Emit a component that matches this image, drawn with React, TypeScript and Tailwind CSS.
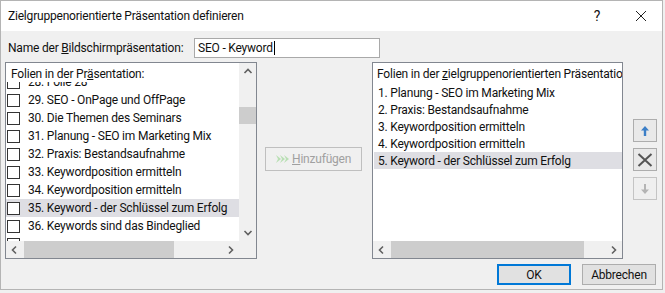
import React from "react";

const leftRows = [
  { n: "28. Folie 28" },
  { n: "29. SEO - OnPage und OffPage" },
  { n: "30. Die Themen des Seminars" },
  { n: "31. Planung - SEO im Marketing Mix" },
  { n: "32. Praxis: Bestandsaufnahme" },
  { n: "33. Keywordposition ermitteln" },
  { n: "34. Keywordposition ermitteln" },
  { n: "35. Keyword - der Schlüssel zum Erfolg", sel: true },
  { n: "36. Keywords sind das Bindeglied" },
  { n: "" },
];

const rightRows = [
  "1. Planung - SEO im Marketing Mix",
  "2. Praxis: Bestandsaufnahme",
  "3. Keywordposition ermitteln",
  "4. Keywordposition ermitteln",
  "5. Keyword - der Schlüssel zum Erfolg",
];

function Chevron({ dir }: { dir: "up" | "down" | "left" | "right" }) {
  const d = {
    up: "M1.5 6 L5 2.5 L8.5 6",
    down: "M1.5 3 L5 6.5 L8.5 3",
    left: "M6 1.5 L2.5 5 L6 8.5",
    right: "M3 1.5 L6.5 5 L3 8.5",
  }[dir];
  return (
    <svg width="10" height="10" viewBox="0 0 10 10">
      <path d={d} fill="none" stroke="#606060" strokeWidth="1.6" />
    </svg>
  );
}

function HScroll({ thumbLeft, thumbWidth }: { thumbLeft: number; thumbWidth: number }) {
  return (
    <div className="flex h-[17px] items-center bg-[#f0f0f0]">
      <div className="flex w-[17px] justify-center">
        <Chevron dir="left" />
      </div>
      <div className="relative h-full flex-1">
        <div
          className="absolute top-0 h-full bg-[#cdcdcd]"
          style={{ left: thumbLeft, width: thumbWidth }}
        />
      </div>
      <div className="flex w-[17px] justify-center">
        <Chevron dir="right" />
      </div>
    </div>
  );
}

export default function App() {
  return (
    <div
      className="h-[293px] w-[665px] bg-[#f0f0f0] text-[12px] tracking-[-0.2px] text-[#111]"
      style={{ fontFamily: 'Roboto, "Open Sans", sans-serif' }}
    >
      <div className="flex h-[290px] w-[663px] flex-col border border-[#b4b4b4] bg-[#f0f0f0]">
        {/* title bar */}
        <div className="flex h-[30px] items-center bg-white pl-[7px]">
          <span className="text-[12px]">Zielgruppenorientierte Präsentation definieren</span>
          <span className="ml-auto w-[14px] text-center text-[14px]">?</span>
          <span className="ml-[30px] mr-[14px] flex w-[14px] justify-center">
            <svg width="12" height="12" viewBox="0 0 12 12">
              <path d="M1 1 L11 11 M11 1 L1 11" stroke="#222" strokeWidth="1" />
            </svg>
          </span>
        </div>

        <div className="flex flex-1 flex-col pl-[4px]">
          {/* name row */}
          <div className="mt-[7px] flex h-[20px] items-center">
            <span className="ml-[3px] w-[186px] whitespace-nowrap">
              Name der <u>B</u>ildschirmpräsentation:
            </span>
            <div className="flex h-[20px] w-[186px] items-center border border-[#a9a9a9] bg-white pl-[3px]">
              SEO - Keyword
              <span className="ml-[1px] inline-block h-[14px] w-[1px] bg-black" />
            </div>
          </div>

          {/* lists row */}
          <div className="mt-[4px] flex">
            {/* left list */}
            <div className="flex h-[197px] w-[252px] flex-col border border-[#828790] bg-white">
              <div className="flex flex-1 overflow-hidden">
                <div className="flex flex-1 flex-col overflow-hidden">
                  <div className="relative z-10 h-[19px] shrink-0 bg-white pl-[5px] pt-[2px]">
                    Folien in der Pr<u>ä</u>sentation:
                  </div>
                  <div className="-mt-[9px] flex flex-col">
                    {leftRows.map((r, i) => (
                      <div
                        key={i}
                        className={`flex h-[18px] shrink-0 items-center whitespace-nowrap pl-[1px] ${r.sel ? "bg-[#dedee3]" : ""}`}
                      >
                        <span className="h-[13px] w-[13px] shrink-0 border border-[#333] bg-white" />
                        <span className="ml-[8px]">{r.n}</span>
                      </div>
                    ))}
                  </div>
                </div>
                <div className="flex w-[17px] shrink-0 flex-col bg-[#f0f0f0]">
                  <div className="flex h-[17px] items-center justify-center">
                    <Chevron dir="up" />
                  </div>
                  <div className="flex-1">
                    <div className="mt-[27px] h-[17px] bg-[#cdcdcd]" />
                  </div>
                  <div className="flex h-[17px] items-center justify-center">
                    <Chevron dir="down" />
                  </div>
                </div>
              </div>
              <div className="flex">
                <div className="flex-1">
                  <HScroll thumbLeft={1} thumbWidth={150} />
                </div>
                <div className="w-[17px] bg-[#f0f0f0]" />
              </div>
            </div>

            {/* add button */}
            <div className="ml-[8px] mt-[85px]">
              <div className="flex h-[24px] w-[97px] items-center border border-[#bfbfbf] bg-[#f0f0f0] pl-[9px] text-[#a0a0a0]">
                <svg width="16" height="10" viewBox="0 0 16 10">
                  <path d="M1 1 L6 5 L1 9 L3 5 Z" fill="#b9dfb4" />
                  <path d="M5 1 L10 5 L5 9 L7 5 Z" fill="#b9dfb4" />
                  <path d="M9 1 L14 5 L9 9 L11 5 Z" fill="#b9dfb4" />
                </svg>
                <span className="ml-[1px]">
                  <u>H</u>inzufügen
                </span>
              </div>
            </div>

            {/* right list */}
            <div className="ml-[10px] flex h-[197px] w-[251px] flex-col border border-[#828790] bg-white">
              <div className="flex flex-1 flex-col overflow-hidden">
                <div className="h-[21px] shrink-0 whitespace-nowrap pl-[4px] pt-[2px]">
                  Folien in der <u>z</u>ielgruppenorientierten Präsentation:
                </div>
                {rightRows.map((r, i) => (
                  <div
                    key={r}
                    className={`ml-[1px] flex h-[17px] shrink-0 items-center whitespace-nowrap pl-[4px] ${i === 4 ? "bg-[#dedee3]" : ""}`}
                  >
                    {r}
                  </div>
                ))}
              </div>
              <HScroll thumbLeft={1} thumbWidth={193} />
            </div>

            {/* side buttons */}
            <div className="ml-[10px] mt-[57px] flex flex-col gap-[6px]">
              <div className="flex h-[23px] w-[24px] items-center justify-center border border-[#adadad] bg-[#e9e9e9]">
                <svg width="10" height="12" viewBox="0 0 10 12">
                  <path d="M5 1 L9 5.5 L6.2 5.5 L6.2 11 L3.8 11 L3.8 5.5 L1 5.5 Z" fill="#3c7fc7" />
                </svg>
              </div>
              <div className="flex h-[23px] w-[24px] items-center justify-center border border-[#adadad] bg-[#e9e9e9]">
                <svg width="16" height="14" viewBox="0 0 16 14">
                  <path d="M1.5 1 L14.5 13 M14.5 1 L1.5 13" stroke="#555" strokeWidth="2" />
                </svg>
              </div>
              <div className="flex h-[23px] w-[24px] items-center justify-center border border-[#c4c4c4] bg-[#efefef]">
                <svg width="10" height="12" viewBox="0 0 10 12">
                  <path d="M5 11 L9 6.5 L6 6.5 L6 1 L4 1 L4 6.5 L1 6.5 Z" fill="#b4b4b4" />
                </svg>
              </div>
            </div>
          </div>

          {/* bottom buttons */}
          <div className="mt-[5px] flex justify-end gap-[11px] pr-[6px]">
            <div className="flex h-[21px] w-[74px] items-center justify-center border-2 border-[#0078d7] bg-[#e1e1e1]">
              OK
            </div>
            <div className="flex h-[21px] w-[74px] items-center justify-center border border-[#adadad] bg-[#e1e1e1]">
              Abbrechen
            </div>
          </div>
        </div>
      </div>
    </div>
  );
}
